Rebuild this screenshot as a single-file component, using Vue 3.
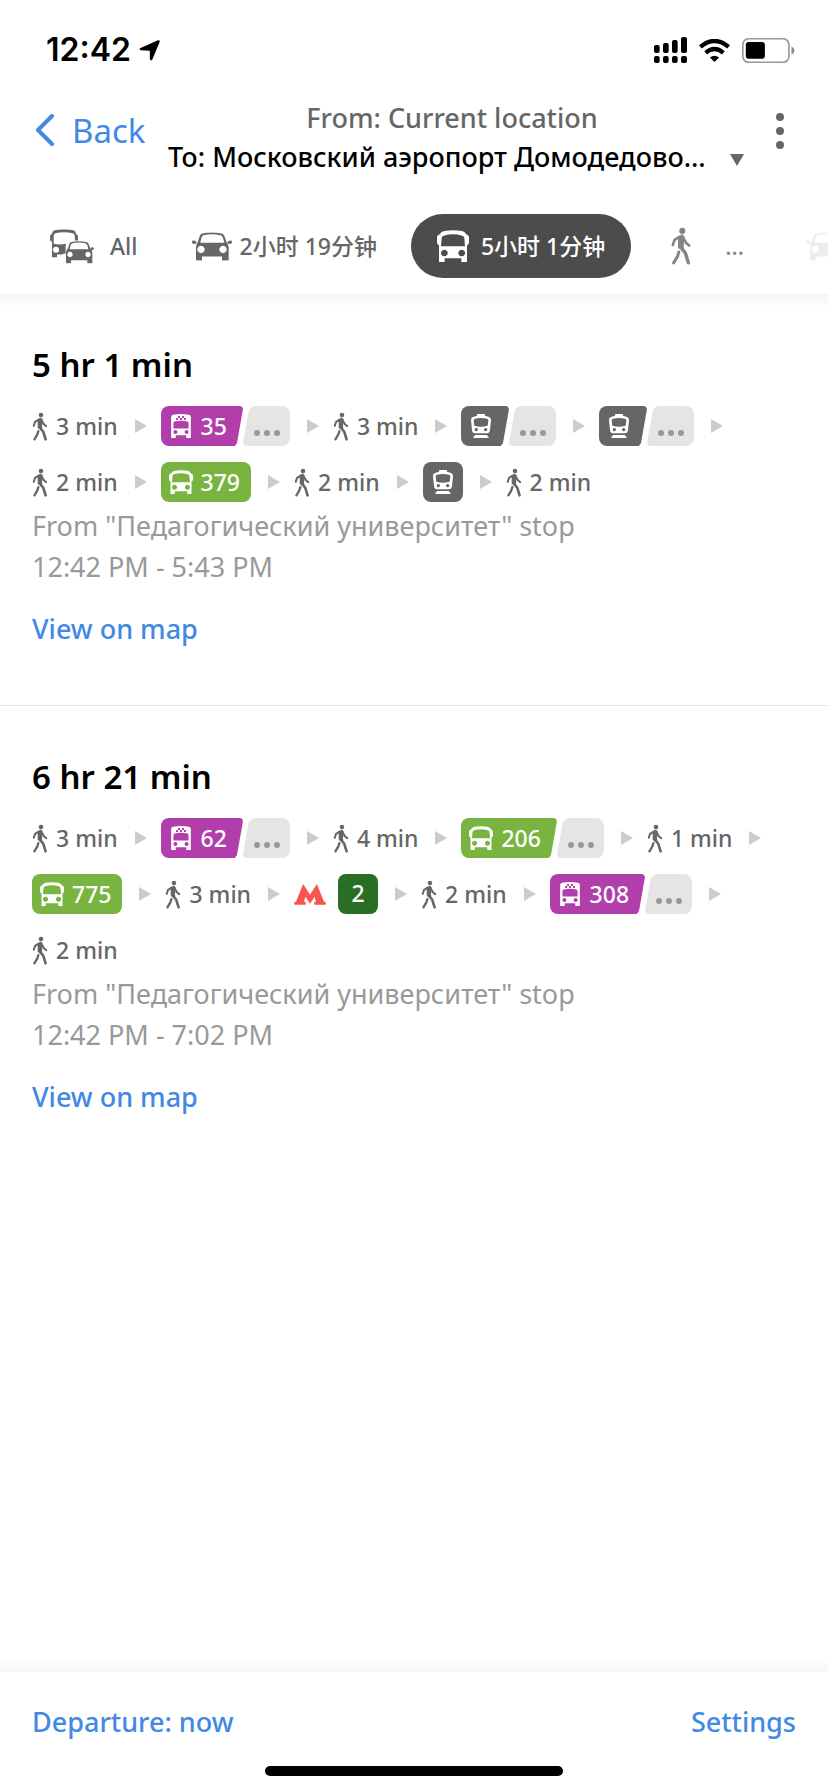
<script setup>
const tabs = [
  { icon: 'all', box: '0 0 132 104', label: 'All', kind: 'all' },
  { icon: 'car', box: '0 0 120 86', label: '2小时 19分钟', kind: 'car' },
  { icon: 'bus', box: '0 0 96 96', label: '5小时 1分钟', kind: 'bus', active: true },
  { icon: 'walk', box: '0 0 48 88', label: '...', kind: 'walk' },
  { icon: 'car', box: '0 0 120 86', label: '', kind: 'taxi' },
]

const walk = (n) => ({ type: 'walk', label: `${n} min` })
const ride = (vehicle, label = '', more = false) => ({ type: 'ride', vehicle, label, more })

const routes = [
  {
    duration: '5 hr 1 min',
    times: '12:42 PM - 5:43 PM',
    steps: [
      walk(3), ride('trolley', '35', true), walk(3), ride('train', '', true), ride('train', '', true),
      walk(2), ride('bus', '379'), walk(2), ride('train'), walk(2),
    ],
  },
  {
    duration: '6 hr 21 min',
    times: '12:42 PM - 7:02 PM',
    steps: [
      walk(3), ride('trolley', '62', true), walk(4), ride('bus', '206', true), walk(1),
      ride('bus', '775'), walk(3), { type: 'metro', label: '2' }, walk(2), ride('trolley', '308', true),
      walk(2),
    ],
  },
]
</script>

<template>
  <div class="app">
    <svg class="sprite" aria-hidden="true">
      <symbol id="i-walk" viewBox="0 0 48 88">
        <circle cx="27" cy="9" r="7" fill="currentColor" />
        <path d="M19 24 L26 19 L31 24 L28 44 L29 50 L19 48 Z" fill="currentColor" stroke="currentColor" stroke-width="4" stroke-linejoin="round" />
        <g fill="none" stroke="currentColor" stroke-linecap="round" stroke-linejoin="round">
          <path d="M20 23 L9 30 L5 42" stroke-width="6" />
          <path d="M32 30 L36 37 L43 43" stroke-width="6" />
          <path d="M24 48 L34 60 L41 83" stroke-width="8" />
          <path d="M19 58 L16 68 L7 83" stroke-width="7" />
        </g>
      </symbol>
      <symbol id="i-bus" viewBox="0 0 96 96">
        <path fill="currentColor" fill-rule="evenodd" d="M22 3Q48-2 74 3Q85 5 87 13Q96 15 96 23V37Q96 44 90 46V96H73V85H23V96H6V46Q0 44 0 37V23Q0 15 9 13Q11 5 22 3ZM20 17Q48 9 76 17Q81 18 82 25L84 49H12L14 25Q15 18 20 17ZM22 59a10 10 0 1 0 .1 0ZM74 59a10 10 0 1 0 .1 0Z" />
      </symbol>
      <symbol id="i-trolley" viewBox="0 0 60 73">
        <path fill="currentColor" fill-rule="evenodd" d="M6 2Q30-2 54 2Q60 3 60 10V73H46V65H14V73H0V10Q0 3 6 2ZM10 23Q30 18 50 23Q53 24 53 30V44H7V30Q7 24 10 23ZM13 49a6 6 0 1 0 .1 0ZM47 49a6 6 0 1 0 .1 0ZM21 6h6v6h-6ZM33 6h6v6h-6ZM15 12h6v6h-6ZM27 12h6v6h-6ZM39 12h6v6h-6Z" />
      </symbol>
      <symbol id="i-train" viewBox="0 0 60 72">
        <path fill="currentColor" fill-rule="evenodd" d="M18 5V2Q18 0 20 0H40Q42 0 42 2V5L54 9Q60 11 60 18L57 48Q56 58 48 58H12Q4 58 3 48L0 18Q0 11 6 9ZM12 14Q30 10 48 14Q53 15 52 20L50 35Q30 41 10 35L8 20Q7 15 12 14ZM16 42a5 5 0 1 0 .1 0ZM44 42a5 5 0 1 0 .1 0ZM12 63H48L54 72H6Z" />
      </symbol>
      <symbol id="i-car" viewBox="0 0 120 86">
        <path fill="currentColor" fill-rule="evenodd" d="M28 5Q60-3 92 5Q97 8 103 29Q110 36 110 46V85H90V73H30V85H12V46Q12 36 18 29Q23 8 28 5ZM32 10Q60 3 88 10Q93 14 97 32H25Q28 14 32 10ZM27 41a11 11 0 1 0 .1 0ZM93 41a11 11 0 1 0 .1 0Z" />
        <path fill="currentColor" d="M0 29Q0 24 6 25L13 28V35Q8 34 6 35Q0 36 0 29ZM120 29Q120 24 114 25L107 28V35Q112 34 114 35Q120 36 120 29Z" />
      </symbol>
      <symbol id="i-all" viewBox="0 0 132 104">
        <path fill="currentColor" d="M14 3Q42-2 70 3Q77 5 79 15Q84 17 84 23V34H75L74 18Q73 13 68 12Q42 7 16 12Q12 14 11 20V44Q28 48 48 44Q46 52 47 74H38V76H21V84H6V38Q0 37 0 31V22Q0 16 5 15Q7 5 14 3Z" />
        <circle cx="18" cy="62" r="9" fill="#fff" />
        <path fill="currentColor" fill-rule="evenodd" d="M61 39Q86 33 112 39Q117 43 121 57Q127 62 127 70V102H112V93H63V102H48V70Q48 62 54 57Q57 43 61 39ZM65 43Q87 37 108 43Q113 47 115 60H59Q61 47 65 43ZM60 68a8 8 0 1 0 .1 0ZM114 68a8 8 0 1 0 .1 0Z" />
        <path fill="currentColor" d="M132 58q-1-5-9-3v7q8 2 9-4Z" />
      </symbol>
    </svg>

    <div class="status">
      <div class="clock">
        <span>12:42</span>
        <svg class="locate" viewBox="0 0 62 62" aria-hidden="true"><path d="M3 24L56 1Q62 0 61 6L39 58Q35 63 32 57V32L5 30Q-1 28 3 24Z" /></svg>
      </div>
      <div class="indicators">
        <svg class="signal" viewBox="0 0 99 78" aria-hidden="true">
          <rect x="0" y="24" width="17" height="24" rx="6" /><rect x="27" y="18" width="17" height="30" rx="6" />
          <rect x="54" y="9" width="17" height="39" rx="6" /><rect x="81" y="0" width="18" height="48" rx="6" />
          <rect x="0" y="57" width="17" height="21" rx="6" /><rect x="27" y="57" width="17" height="21" rx="6" />
          <rect x="54" y="57" width="17" height="21" rx="6" /><rect x="81" y="57" width="18" height="21" rx="6" />
        </svg>
        <svg class="wifi" viewBox="0 0 94 70" aria-hidden="true">
          <g fill="none" stroke="#000" stroke-width="13"><path d="M4 24Q47-12 90 24" /><path d="M20 42Q47 19 74 42" /></g>
          <path d="M33 56Q47 46 61 56L47 70Z" />
        </svg>
        <svg class="battery" viewBox="0 0 160 76" aria-hidden="true">
          <rect x="2" y="2" width="140" height="72" rx="18" fill="none" stroke="#999" stroke-width="5" />
          <rect x="11" y="12" width="58" height="51" rx="9" />
          <path d="M150 26q9 4 9 12t-9 12Z" fill="#888" />
        </svg>
      </div>
    </div>

    <header class="header">
      <button class="back" type="button">
        <svg viewBox="0 0 18 32" aria-hidden="true"><path d="M16 2L2 16L16 30" fill="none" stroke="currentColor" stroke-width="4" stroke-linecap="round" stroke-linejoin="round" /></svg>
        Back
      </button>
      <button class="direction" type="button">
        <span class="from">From: Current location</span>
        <span class="to"><span>To: Московский аэропорт Домодедово...</span><i class="caret"></i></span>
      </button>
      <button class="menu" type="button" aria-label="Menu"><i></i><i></i><i></i></button>
    </header>

    <nav class="tabs">
      <button v-for="tab in tabs" :key="tab.kind" type="button" class="tab" :class="[tab.kind, { active: tab.active }]" :aria-label="tab.kind">
        <svg :viewBox="tab.box" aria-hidden="true"><use :href="`#i-${tab.icon}`" /></svg>
        <span v-if="tab.label">{{ tab.label }}</span>
      </button>
    </nav>

    <main class="routes">
      <section v-for="route in routes" :key="route.duration" class="route">
        <h2>{{ route.duration }}</h2>
        <ol class="steps">
          <li v-for="(step, i) in route.steps" :key="i">
            <span v-if="step.type === 'walk'" class="walk">
              <svg viewBox="0 0 48 88" aria-hidden="true"><use href="#i-walk" /></svg>{{ step.label }}
            </span>
            <template v-else-if="step.type === 'ride'">
              <span class="badge" :class="[step.vehicle, { slanted: step.more }]">
                <svg viewBox="0 0 24 24" aria-hidden="true"><use :href="`#i-${step.vehicle}`" width="24" height="24" /></svg>
                <span v-if="step.label">{{ step.label }}</span>
              </span>
              <span v-if="step.more" class="more"><i></i><i></i><i></i></span>
            </template>
            <span v-else class="metro">
              <svg viewBox="0 0 96 64" aria-hidden="true"><path fill="#f9544d" d="M27 0L48 33L69 0L91 55H96V63H61V55H66L62 39L48 60L34 39L30 55H35V63H0V55H5Z" /></svg>
              <span class="line">{{ step.label }}</span>
            </span>
            <i v-if="i < route.steps.length - 1" class="arrow"></i>
          </li>
        </ol>
        <p>From "Педагогический университет" stop</p>
        <p>{{ route.times }}</p>
        <a href="#map">View on map</a>
      </section>
    </main>

    <footer class="footer">
      <div class="actions">
        <button type="button">Departure: now</button>
        <button type="button">Settings</button>
      </div>
      <div class="home"></div>
    </footer>
  </div>
</template>

<style>
body { background: #fff; }
</style>

<style scoped>
* { box-sizing: border-box; }
.app {
  min-height: 100vh;
  display: flex;
  flex-direction: column;
  background: #fff;
  color: #000;
  font-family: "Noto Sans", "Noto Sans CJK SC", sans-serif;
  overflow: hidden;
}
.sprite { position: absolute; width: 0; height: 0; }
button { border: 0; padding: 0; background: none; font: inherit; color: inherit; cursor: pointer; }
svg { display: block; flex: none; }

.status { height: 98px; padding: 2px 33px 0 46px; display: flex; align-items: center; justify-content: space-between; }
.clock { display: flex; align-items: center; gap: 8px; font: 600 32px/40px Inter, sans-serif; }
.locate { width: 21px; height: 21px; }
.indicators { display: flex; align-items: center; gap: 12px; }
.signal { width: 33px; height: 26px; }
.wifi { width: 31px; height: 23px; }
.battery { width: 53px; height: 25px; }

.header { height: 116px; padding: 0 32px 0 36px; display: flex; align-items: flex-start; }
.back { display: flex; align-items: center; gap: 18px; width: 132px; height: 64px; flex: none; color: #4189e4; font-size: 33px; }
.back svg { width: 18px; height: 32px; }
.direction { flex: 1; min-width: 0; display: flex; flex-direction: column; align-items: center; font-size: 27px; line-height: 39px; font-weight: 500; white-space: nowrap; }
.from { color: #666; padding-right: 8px; }
.to { display: flex; align-items: center; justify-content: space-between; gap: 8px; width: 100%; }
.caret { border: 7px solid transparent; border-top: 12px solid #666; border-bottom: 0; margin-top: 6px; }
.menu { width: 52px; height: 66px; flex: none; display: flex; flex-direction: column; align-items: flex-end; justify-content: center; gap: 6px; padding-right: 12px; }
.menu i { width: 8px; height: 8px; border-radius: 50%; background: #666; }

.tabs { height: 80px; flex: none; padding-left: 26px; display: flex; align-items: flex-start; gap: 10px; white-space: nowrap; overflow: hidden; }
.tab { height: 64px; flex: none; padding: 0 24px; display: flex; align-items: center; gap: 12px; border-radius: 32px; color: #666; font-size: 23px; line-height: 32px; font-weight: 500; }
.tab.all { padding-right: 20px; gap: 16px; }
.tab.all svg { width: 44px; height: 35px; }
.tab.car { gap: 8px; }
.tab.car svg { width: 40px; height: 29px; }
.tab.bus svg { width: 32px; height: 32px; }
.tab.walk { gap: 28px; color: #858585; }
.tab.walk svg { width: 32px; height: 38px; }
.tab.taxi { color: #ededed; padding: 0 28px; }
.tab.taxi svg { width: 40px; height: 29px; }
.tab.active { padding: 0 26px; background: #4c4c4c; color: #fff; }

.routes { flex: 1; background: linear-gradient(#f5f5f5, #fff 14px); }
.route { padding: 47px 32px 56px; }
.route + .route { border-top: 1px solid #e2e2e2; }
h2 { margin: 0 0 17px; font-size: 33px; line-height: 48px; font-weight: 600; }
.steps { list-style: none; margin: 0 0 3px; padding: 0; display: flex; flex-wrap: wrap; row-gap: 16px; color: #666; font-size: 23px; font-weight: 500; }
.steps li { display: flex; align-items: center; height: 40px; line-height: 38px; white-space: nowrap; }
.arrow { border: 7px solid transparent; border-left: 12px solid #ccc; border-right: 0; margin: 0 14px 0 17px; }
.walk { display: flex; align-items: center; gap: 8px; }
.walk svg { width: 16px; height: 29px; }
.badge { position: relative; z-index: 0; height: 40px; padding: 0 11px 0 8px; display: flex; align-items: center; gap: 8px; border-radius: 8px; background: var(--tone); color: #fff; }
.badge svg { width: 24px; height: 24px; }
.badge.train { --tone: #666; padding: 0 8px; }
.badge.bus { --tone: #79b440; }
.badge.trolley { --tone: #b13eaa; }
.badge.slanted { padding-right: 16px; background: none; }
.badge.slanted::before { content: ""; position: absolute; z-index: -1; inset: 0 8px 0 0; border-radius: 8px 0 0 8px; background: var(--tone); }
.badge.slanted::after { content: ""; position: absolute; z-index: -1; inset: 0 3px 0 auto; width: 20px; border-radius: 0 4px 4px 0; background: var(--tone); transform: skewX(-10deg); }
.more { position: relative; z-index: 0; width: 47px; height: 40px; padding: 0 10px 10px 0; display: flex; align-items: flex-end; justify-content: flex-end; gap: 4px; }
.more::before { content: ""; position: absolute; z-index: -1; inset: 0 0 0 12px; border-radius: 0 8px 8px 0; background: #e5e5e5; }
.more::after { content: ""; position: absolute; z-index: -1; inset: 0 auto 0 3px; width: 20px; border-radius: 6px 0 0 4px; background: #e5e5e5; transform: skewX(-10deg); }
.more i { width: 6px; height: 6px; border-radius: 50%; background: #999; }
.metro { display: flex; align-items: center; gap: 12px; }
.metro svg { width: 32px; height: 21px; }
.line { width: 40px; height: 40px; border-radius: 8px; background: #286f25; color: #fff; text-align: center; }
p { margin: 0; color: #999; font-size: 27px; line-height: 41px; }
.route a { display: inline-block; margin-top: 22px; color: #4189e4; font-size: 27px; line-height: 40px; font-weight: 500; text-decoration: none; }

.footer { position: relative; height: 120px; }
.footer::before { content: ""; position: absolute; inset: -14px 0 auto; height: 14px; background: linear-gradient(#fff, #f5f5f5); }
.actions { height: 94px; padding: 4px 32px 0; display: flex; align-items: center; justify-content: space-between; color: #4189e4; font-size: 27px; font-weight: 500; }
.home { width: 36%; height: 10px; margin: 0 auto; border-radius: 5px; background: #000; }
</style>
